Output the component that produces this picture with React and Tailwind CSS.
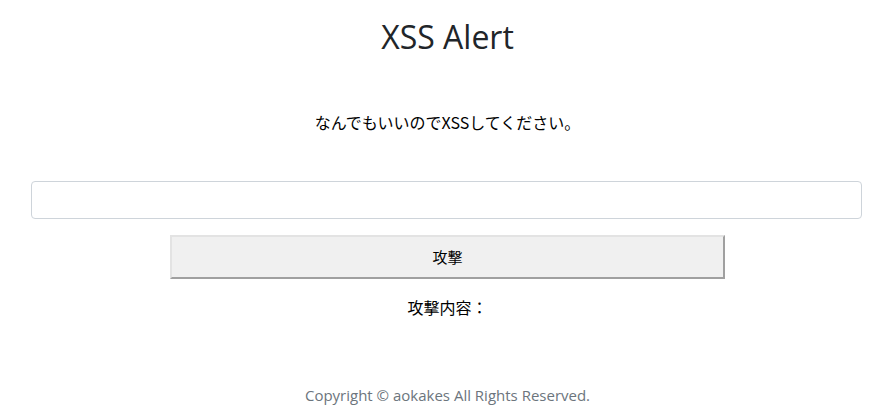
export default function App() {
  return (
    <div className="w-[895px] h-[419px] bg-white text-[#212529] flex flex-col items-center font-['Open_Sans','Noto_Sans_CJK_JP',sans-serif]">
      <h1 className="mt-[15px] text-[32px] leading-[44px] text-[#212529]">XSS Alert</h1>
      <p className="mt-[51px] text-[16px] leading-[24px] text-black font-['Noto_Sans_CJK_JP','Noto_Sans',sans-serif]">なんでもいいのでXSSしてください。</p>
      <input type="text" className="mt-[47px] w-[831px] h-[38px] border border-[#ced4da] rounded-[4px] ml-[-2px] bg-white" />
      <button className="mt-[16px] w-[555px] h-[44px] bg-[#f0f0f0] border-2 border-t-[#e3e3e3] border-l-[#e3e3e3] border-b-[#a0a0a0] border-r-[#a0a0a0] text-[15px] text-black font-['Noto_Sans_CJK_JP','Noto_Sans',sans-serif]">攻撃</button>
      <p className="mt-[16px] text-[16px] leading-[24px] text-black font-['Noto_Sans_CJK_JP','Noto_Sans',sans-serif]">攻撃内容：</p>
      <p className="mt-[64px] text-[15px] leading-[24px] text-[#6c757d]">Copyright © aokakes All Rights Reserved.</p>
    </div>
  );
}
